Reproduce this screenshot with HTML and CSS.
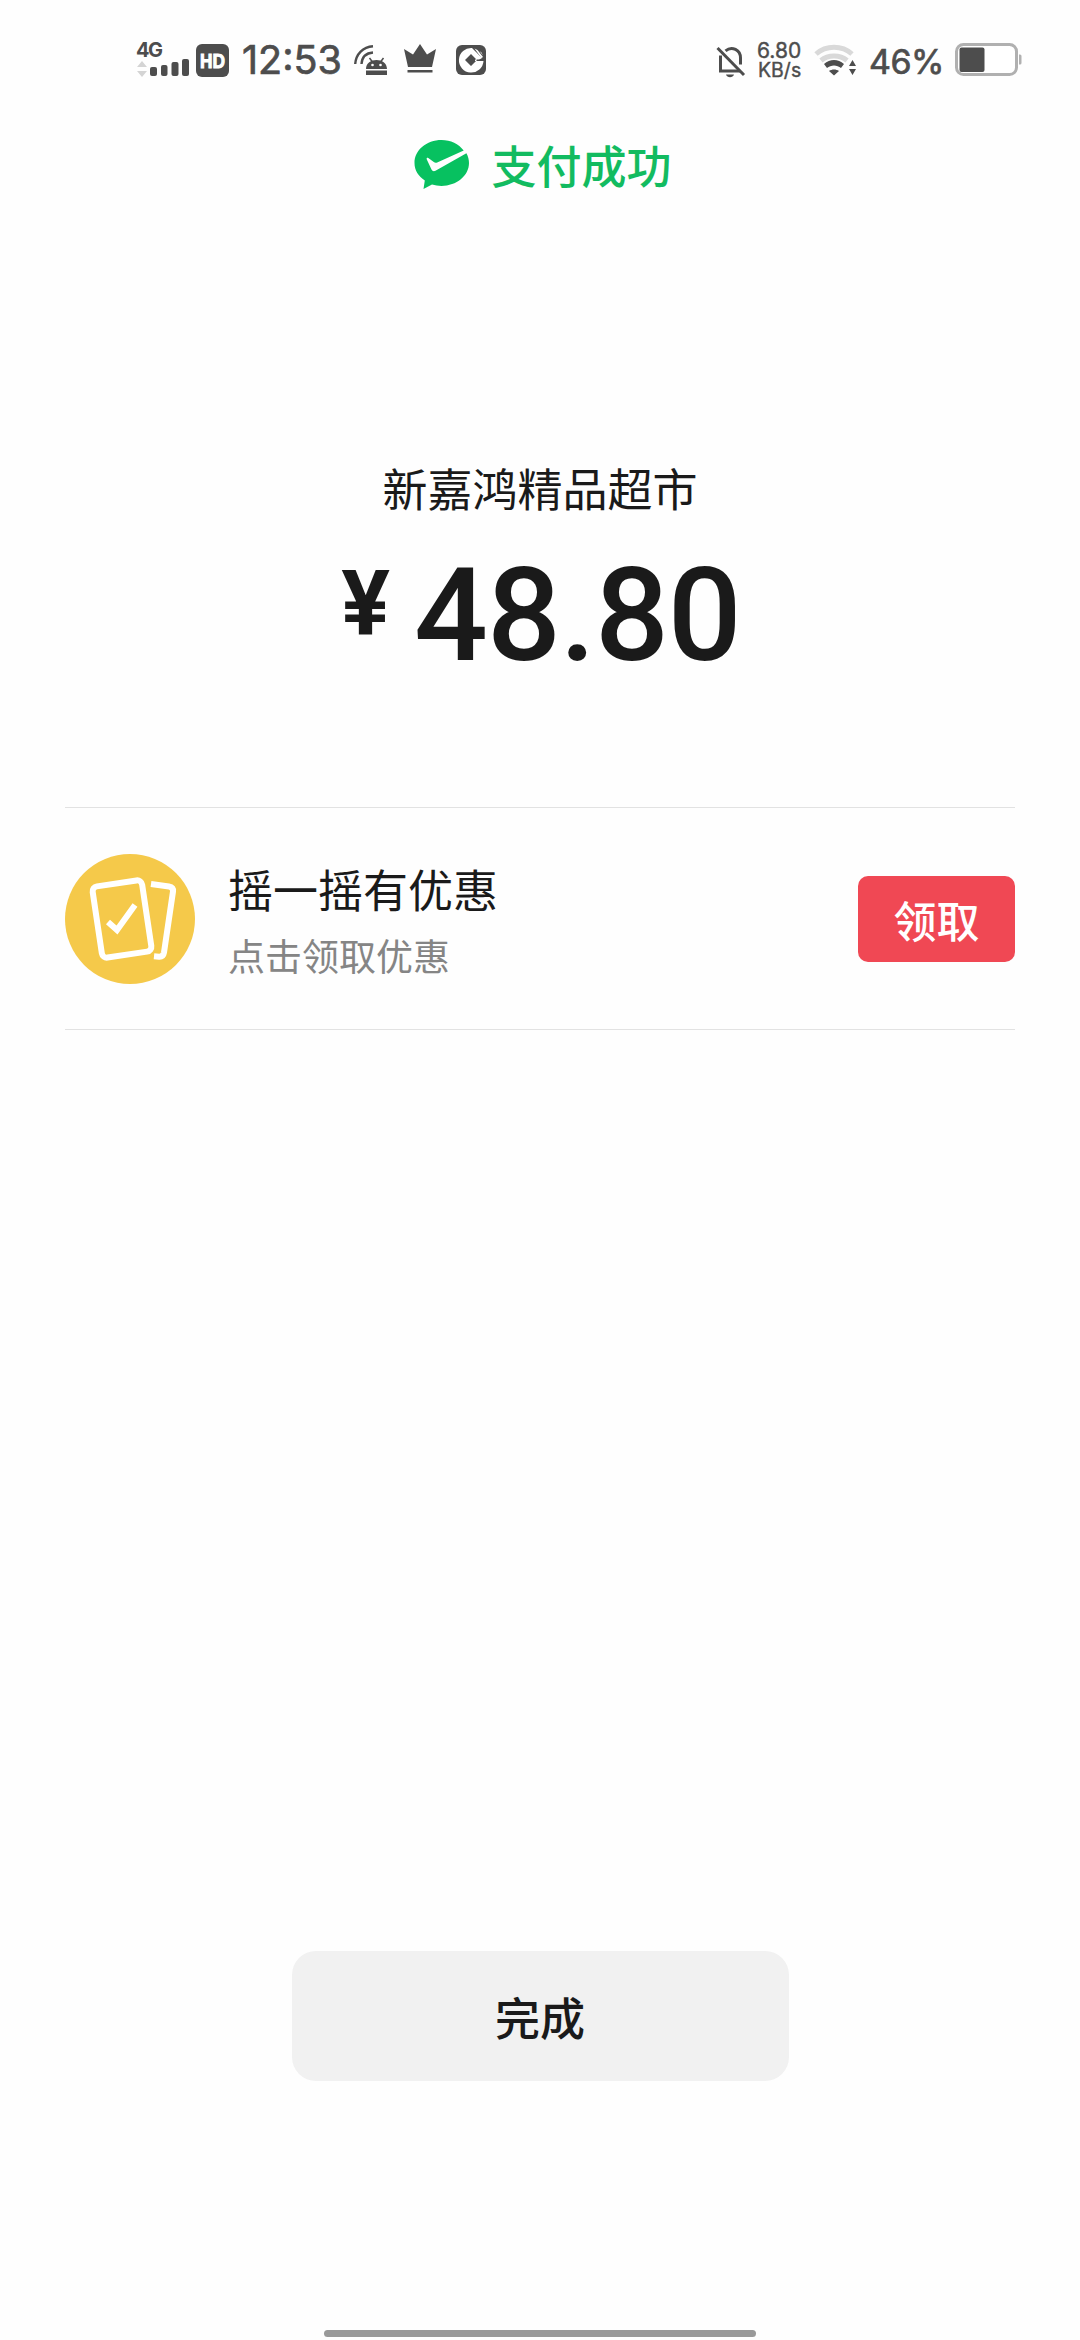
FILE: index.html
```html
<!DOCTYPE html>
<html lang="zh-CN">
<head>
<meta charset="utf-8">
<title>支付成功</title>
<link rel="stylesheet" href="styles.css">
</head>
<body>
<div class="screen">
  <header class="status">
    <div class="network">
      <span class="network-type">4G</span>
      <svg class="signal" width="54" height="18" viewBox="0 0 54 18">
        <path fill="#d4d4d4" d="M1 7L6 1l5 6zM1 11h10l-5 6z"/>
        <g fill="#4d4d4d"><rect x="14" y="7" width="7" height="9" rx="2"/><rect x="25" y="5" width="6.500" height="11" rx="2"/><rect x="35.500" y="2" width="7" height="14" rx="2"/><rect x="46" y="-1" width="7" height="17" rx="2"/></g>
      </svg>
    </div>
    <svg class="hd" width="33" height="33" viewBox="0 0 33 33">
      <rect width="33" height="33" rx="6" fill="#4d4d4d"/>
      <text x="4" y="23.500" textLength="25" lengthAdjust="spacingAndGlyphs">HD</text>
    </svg>
    <span class="clock">12:53</span>
    <svg class="cast" width="34" height="31" viewBox="0 0 34 31">
      <g fill="none" stroke="#4d4d4d" stroke-width="2.400"><path d="M1.200 19C2 9 9 2 19 1.200M7.500 19C8 12.500 12 8 19 7.500"/><path stroke-width="1.500" d="M15.500 13l3 4M29.500 13l-3 4"/></g>
      <path fill="#4d4d4d" d="M12 24c0-12 21-12 21 0zM12 25.500h21V30H12z"/>
      <circle cx="18.500" cy="20" r="1.300" fill="#fff"/><circle cx="26.500" cy="20" r="1.300" fill="#fff"/>
    </svg>
    <svg class="crown" width="34" height="29" viewBox="0 0 34 29">
      <path fill="#4d4d4d" d="M1 5l9 5.500L17 0l7 10.500L33 5l-4 18H5zM4.500 26h25v2.500h-25z"/>
    </svg>
    <svg class="coin" width="30" height="30" viewBox="0 0 30 30">
      <rect width="30" height="30" rx="6" fill="#4d4d4d"/>
      <path fill="#fff" d="M27.500 16A12.300 12.300 0 1 1 16 3l10 10-5 3z"/>
      <path fill="#4d4d4d" d="M15 9l6 6-6 6-6-6zM19 16h11v-1.500H19z"/>
      <path fill="#fff" d="M18.500 3.500l3 1.500 5.500 7-1.500 1zM23.500 6l2 1.500 1.500 3z"/>
    </svg>
    <svg class="bell" width="30" height="32" viewBox="0 0 30 32">
      <g fill="none" stroke="#4d4d4d" stroke-width="3"><path d="M4.500 9.500V25H24M9.500 4.800C16-.5 24.500 4 24.500 12v6.500"/><path d="M1.500 2L28 29"/></g>
      <path fill="#4d4d4d" d="M10 28.500h8c-1 3.500-7 3.500-8 0z"/>
    </svg>
    <div class="speed"><span class="speed-value">6.80</span><span class="speed-unit">KB/s</span></div>
    <svg class="wifi" width="44" height="32" viewBox="0 0 44 32">
      <g fill="none" stroke="#d9d9d9" stroke-width="5"><path d="M2 10C12 1 28 1 38 10M7 16.500C14 10.500 26 10.500 33 16.500"/></g>
      <path fill="#4d4d4d" d="M10 20C16 14.500 24 14.500 30 20L27 24c-4-3.500-10-3.500-14 0zM15 27c3-2 7-2 10 0l-5 4.500zM35 22h7l-3.500-6zM35 25h7l-3.500 6z"/>
    </svg>
    <span class="percent">46%</span>
    <svg class="battery" width="67" height="34" viewBox="0 0 67 34">
      <rect x="1.500" y="1.500" width="60" height="30" rx="7" fill="#fff" stroke="#b0b0b0" stroke-width="3"/>
      <rect x="4.500" y="4.500" width="25" height="24.500" rx="2" fill="#4d4d4d"/>
      <path fill="#b0b0b0" d="M64 11.500h1q1.500 0 1.500 1.500v7q0 1.500-1.500 1.500h-1z"/>
    </svg>
  </header>

  <div class="result">
    <svg width="56" height="51" viewBox="0 0 56 51">
      <path fill="#07c160" d="M27.500 1C12.500 1 .5 11.200.5 24c0 7.500 4 13.200 10.300 17.400L9.500 50l8.500-4.500c3 .9 6.200 1.400 9.500 1.400 15 0 27.500-10.200 27.500-22.900 0-3.500-.9-6.900-2.600-9.800L21.500 31.700c-1.700.9-3 .5-4-1.200L12.700 20.300c-.4-1.200.6-1.800 1.600-1.200l5.500 4c1 .7 2.200.8 3.400.3L49.700 11.500C44.700 5 36.700 1 27.500 1z"/>
    </svg>
    <span>支付成功</span>
  </div>

  <main class="payment">
    <div class="merchant">新嘉鸿精品超市</div>
    <div class="amount"><span class="currency">¥</span><span class="number">48.80</span></div>
  </main>

  <section class="offer">
    <svg class="offer-icon" width="130" height="130" viewBox="0 0 130 130">
      <circle cx="65" cy="65" r="65" fill="#f5c94a"/>
      <g fill="none" stroke="#fff" stroke-width="6">
        <rect x="32" y="29" width="50" height="72" rx="5" transform="rotate(-8.500 57 65)"/>
        <path d="M86 30l18 2.500q4.500.7 4 5l-9 61q-.8 4.500-5 4.200l-5-.5"/>
        <path d="M43 68l9 8L70 51"/>
      </g>
    </svg>
    <div class="offer-copy">
      <div class="offer-title">摇一摇有优惠</div>
      <div class="offer-note">点击领取优惠</div>
    </div>
    <button class="claim">领取</button>
  </section>

  <footer class="footer">
    <button class="done">完成</button>
    <div class="home-bar"></div>
  </footer>
</div>
</body>
</html>
```
FILE: styles.css
```css
* {
  box-sizing: border-box;
}

body {
  margin: 0;
  background: #fefefe;
  color: #1a1a1a;
  font-family: Roboto, "Noto Sans CJK SC", sans-serif;
}

button {
  border: 0;
  padding: 0;
  font-family: inherit;
}

svg {
  display: block;
  flex: none;
}

.screen {
  width: 1080px;
  height: 2340px;
  display: flex;
  flex-direction: column;
  overflow: hidden;
}

.status {
  height: 120px;
  padding: 0 59px 0 136px;
  display: flex;
  align-items: center;
  color: #4d4d4d;
  white-space: nowrap;
}

.network {
  width: 60px;
  display: flex;
  flex-direction: column;
}

.network-type {
  height: 19px;
  margin-top: -2px;
  font: 700 20px/19px Inter, sans-serif;
  letter-spacing: -1.5px;
}

.signal {
  overflow: visible;
}

.hd text {
  font: 700 20px "Liberation Sans", sans-serif;
  fill: #fff;
  stroke: #fff;
}

.clock {
  width: 111px;
  padding-left: 13px;
  font: 400 39.5px/60px Inter, sans-serif;
  -webkit-text-stroke: 0.7px;
}

.cast {
  margin-left: 14px;
}

.crown {
  margin: -4px 0 0 15px;
}

.coin {
  margin-left: 19px;
}

.bell {
  margin: 3px 0 0 auto;
}

.speed {
  width: 68px;
  padding-left: 11px;
  display: flex;
  flex-direction: column;
  font: 400 19.5px/20px Inter, sans-serif;
  -webkit-text-stroke: 0.4px;
}

.speed-value {
  font-size: 21px;
  line-height: 19px;
}

.speed-unit {
  padding-left: 1px;
}

.wifi {
  margin-right: 11px;
}

.percent {
  width: 86px;
  padding-top: 4px;
  font: 400 34px/60px Inter, sans-serif;
  letter-spacing: -0.5px;
  -webkit-text-stroke: 0.7px;
}

.battery {
  margin-right: -1px;
}

.result {
  margin-top: 19px;
  padding-left: 6px;
  height: 51px;
  display: flex;
  justify-content: center;
  align-items: center;
  gap: 21px;
  color: #12bb60;
  font-size: 45px;
  font-weight: 500;
}

.payment {
  height: 617px;
  padding-top: 269px;
  text-align: center;
}

.merchant {
  font-size: 45px;
  line-height: 66px;
}

.amount {
  margin-top: 15px;
  padding-left: 2px;
  display: flex;
  justify-content: center;
  align-items: flex-start;
}

.currency {
  margin-right: 24px;
  font-size: 91px;
  font-weight: 700;
  line-height: 128px;
}

.number {
  font-size: 130px;
  font-weight: 500;
  line-height: 152px;
  letter-spacing: -1px;
}

.offer {
  height: 223px;
  margin: 0 65px;
  border-top: 1px solid #e2e2e2;
  border-bottom: 1px solid #e2e2e2;
  display: flex;
  align-items: center;
}

.offer-copy {
  flex: 1;
  margin-left: 33px;
  padding-top: 15px;
}

.offer-title {
  font-size: 45px;
  line-height: 66px;
}

.offer-note {
  font-size: 37px;
  line-height: 66px;
  color: #858585;
}

.claim {
  width: 157px;
  height: 86px;
  border-radius: 10px;
  background: #f04854;
  color: #fff;
  font-size: 43px;
  font-weight: 500;
}

.footer {
  flex: 1;
  padding-bottom: 3px;
  display: flex;
  flex-direction: column;
  justify-content: flex-end;
  align-items: center;
}

.done {
  width: 497px;
  height: 130px;
  border-radius: 24px;
  background: #f1f1f1;
  color: #1a1a1a;
  font-size: 45px;
  font-weight: 500;
}

.home-bar {
  width: 432px;
  height: 7px;
  margin-top: 249px;
  border-radius: 4px;
  background: #999;
}
```
